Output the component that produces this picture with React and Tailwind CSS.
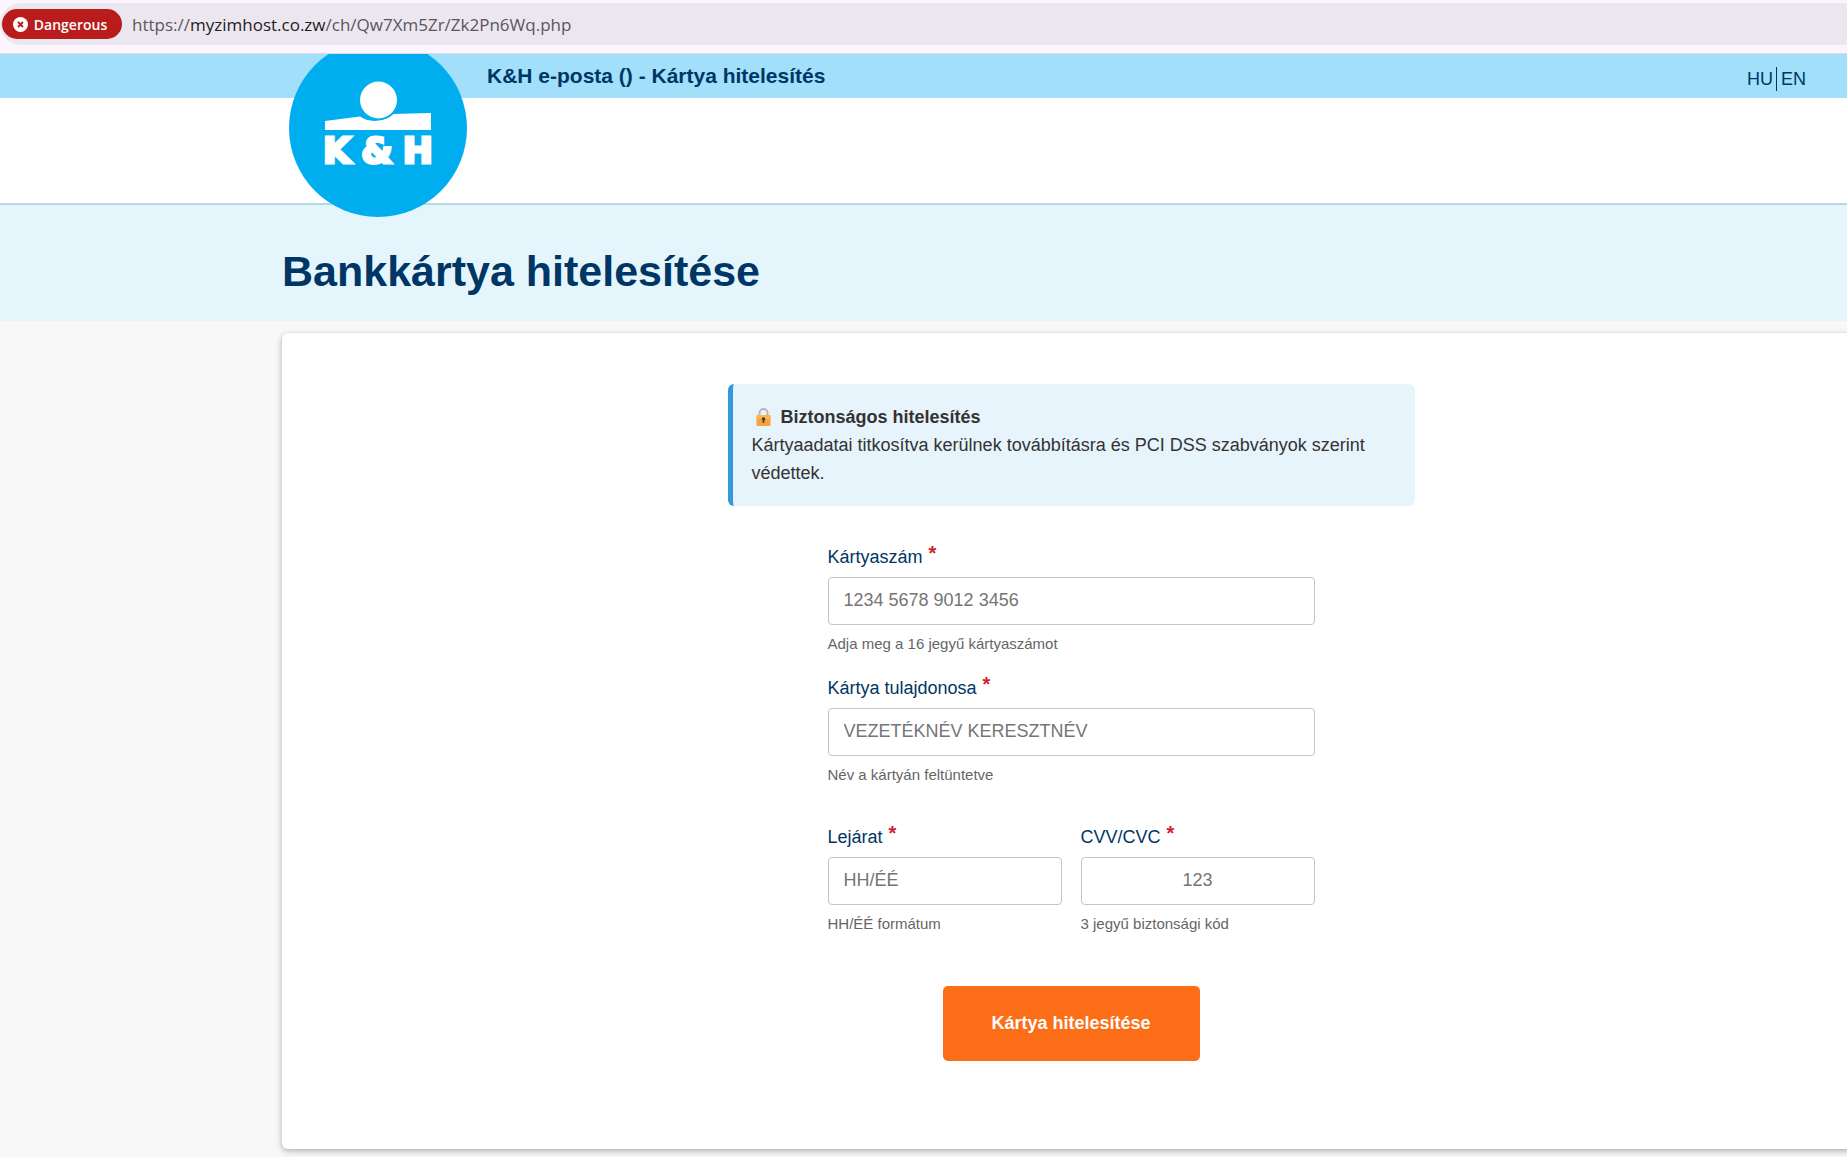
import { useId } from 'react'

function AddressBar() {
  return (
    <div className="bg-[#fdf5fd] pt-[3px] pb-2 border-b border-[#e3d9e8]">
      <div className="h-[42px] rounded-l-full bg-[#ece7ef] flex items-center pl-[2px] gap-[10px]">
        <div className="h-[30px] w-[120px] rounded-full bg-[#b91c1c] text-white flex items-center justify-center gap-[6px] pr-1 font-['Open_Sans',sans-serif] text-[14px] font-semibold">
          <svg width="15" height="15" viewBox="0 0 15 15" className="shrink-0">
            <circle cx="7.5" cy="7.5" r="7.5" fill="#fff" />
            <path d="M5 5l5 5M10 5l-5 5" stroke="#b91c1c" strokeWidth="1.8" />
          </svg>
          Dangerous
        </div>
        <span className="font-['Open_Sans',sans-serif] text-[17px] text-[#5a565e] whitespace-nowrap pt-[2px]">
          https://<span className="text-[#1f1b24]">myzimhost.co.zw</span>/ch/Qw7Xm5Zr/Zk2Pn6Wq.php
        </span>
      </div>
    </div>
  )
}

function Logo() {
  return (
    <svg width="178" height="178" viewBox="0 0 178 178" role="img" aria-label="K&H" className="block">
      <circle cx="89" cy="89" r="89" fill="#00aeef" />
      <path d="M36 82L71 77.500C79 83.500 94 84 103 75L142 74V91H36Z" fill="#fff" />
      <circle cx="90" cy="61" r="20" fill="#00aeef" />
      <circle cx="89.500" cy="61" r="18.500" fill="#fff" />
      <g fontSize="36" fill="#fff" stroke="#fff" strokeWidth="3" className="font-['DejaVu_Sans',sans-serif] font-bold">
        <text x="34" y="124">K</text>
        <text x="88" y="124" textAnchor="middle">&amp;</text>
        <text x="144" y="124" textAnchor="end">H</text>
      </g>
    </svg>
  )
}

function Field({ label, placeholder, hint, center }) {
  const id = useId()
  return (
    <div>
      <label htmlFor={id} className="flex gap-[6px] mb-[6px] text-[18px] leading-7 text-[#003665]">
        {label}
        <span className="text-[#d0202e] font-bold text-[20px] leading-5">*</span>
      </label>
      <input
        id={id}
        type="text"
        readOnly
        autoComplete="off"
        placeholder={placeholder}
        className={`block w-full h-12 px-[15px] pb-[2px] border border-[#c4c4c4] rounded-[4px] bg-white text-[18px] placeholder:text-[#757575] outline-none ${center ? 'text-center' : ''}`}
      />
      <p className="mt-2 text-[15px] leading-[22px] text-[#666]">{hint}</p>
    </div>
  )
}

export default function App() {
  return (
    <div className="min-h-screen overflow-hidden bg-[#f8f8f8] font-['Liberation_Sans',Arial,sans-serif] text-[#333]">
      <AddressBar />

      <header className="relative bg-white border-b-2 border-[#b5d9e4] pb-[105px]">
        <div className="h-11 bg-[#a1dffb] text-[#003665] flex items-center justify-between pl-[487px] pr-[41px]">
          <h2 className="text-[21px] font-bold">K&amp;H e-posta () - Kártya hitelesítés</h2>
          <nav className="flex items-center text-[18px] leading-6 pt-[6px]">
            <a href="#hu" className="pr-[3px] border-r border-[#003665]">HU</a>
            <a href="#en" className="pl-[4px]">EN</a>
          </nav>
        </div>
        {/* the badge hangs below the header and its top is cut by the page edge */}
        <div className="absolute left-[289px] top-0 h-[163px] overflow-hidden flex items-end">
          <Logo />
        </div>
      </header>

      <div className="bg-[#e4f6fc] pl-[282px] pt-10 pb-6">
        <h1 className="text-[43px] leading-[52px] font-bold text-[#003665]">Bankkártya hitelesítése</h1>
      </div>

      <main className="mt-3 ml-[282px] -mr-[13px] mb-2 bg-white rounded-[6px] shadow-[0_2px_6px_rgba(0,0,0,0.3)] pt-[51px] pb-[88px] flex flex-col items-center">
        <div className="w-full max-w-[687px] border-l-[5px] border-[#3498db] rounded-[6px] bg-[#e8f4fb] p-[19px] text-[18px] leading-7">
          <p className="flex items-center font-bold">
            <svg width="23" height="20" viewBox="0 0 23 20" className="mr-[6px]">
              <path d="M7.500 9V6a4 4 0 0 1 8 0v3" fill="none" stroke="#b5b9bd" strokeWidth="2" />
              <rect x="4.500" y="8" width="14" height="11" rx="1" fill="#f9a13d" />
              <path d="M4.500 9a1 1 0 0 1 1-1h12a1 1 0 0 1 1 1v3h-14z" fill="#fcb750" />
              <circle cx="11.500" cy="12" r="1.800" fill="#4a3a35" />
              <path d="M10.800 12h1.400v4h-1.400z" fill="#4a3a35" />
            </svg>
            Biztonságos hitelesítés
          </p>
          <p>Kártyaadatai titkosítva kerülnek továbbításra és PCI DSS szabványok szerint védettek.</p>
        </div>

        <div className="w-full max-w-[487px] mt-[37px] flex flex-col">
          <Field label="Kártyaszám" placeholder="1234 5678 9012 3456" hint="Adja meg a 16 jegyű kártyaszámot" />
          <div className="mt-[19px]">
            <Field label="Kártya tulajdonosa" placeholder="VEZETÉKNÉV KERESZTNÉV" hint="Név a kártyán feltüntetve" />
          </div>
          <div className="mt-[37px] grid grid-cols-2 gap-[19px]">
            <Field label="Lejárat" placeholder="HH/ÉÉ" hint="HH/ÉÉ formátum" />
            <Field label="CVV/CVC" placeholder="123" hint="3 jegyű biztonsági kód" center />
          </div>
          <button type="button" className="mt-[51px] self-center w-[257px] h-[75px] rounded-[5px] bg-[#fb6d17] text-white text-[18px] font-bold">
            Kártya hitelesítése
          </button>
        </div>
      </main>
    </div>
  )
}
